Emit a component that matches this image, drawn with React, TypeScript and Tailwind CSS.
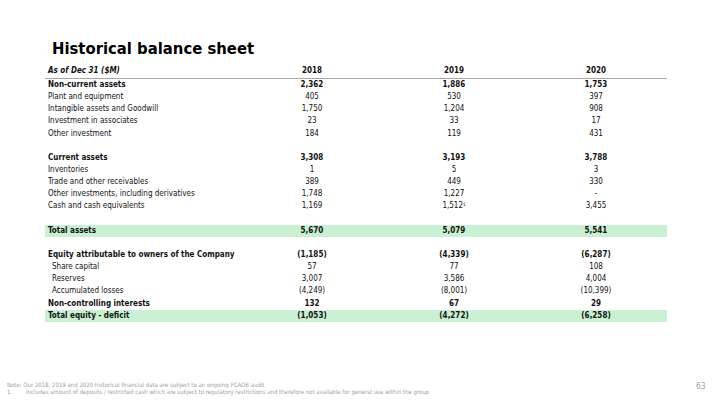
import React from "react";

type Row = {
  label?: string;
  vals?: [React.ReactNode, React.ReactNode, React.ReactNode];
  bold?: boolean;
  green?: boolean;
  indent?: boolean;
};

const rows: Row[] = [
  { label: "Non-current assets", vals: ["2,362", "1,886", "1,753"], bold: true },
  { label: "Plant and equipment", vals: ["405", "530", "397"] },
  { label: "Intangible assets and Goodwill", vals: ["1,750", "1,204", "908"] },
  { label: "Investment in associates", vals: ["23", "33", "17"] },
  { label: "Other investment", vals: ["184", "119", "431"] },
  {},
  { label: "Current assets", vals: ["3,308", "3,193", "3,788"], bold: true },
  { label: "Inventories", vals: ["1", "5", "3"] },
  { label: "Trade and other receivables", vals: ["389", "449", "330"] },
  { label: "Other investments, including derivatives", vals: ["1,748", "1,227", "-"] },
  {
    label: "Cash and cash equivalents",
    vals: [
      "1,169",
      <span>
        1,512<span className="text-[7px]">¹</span>
      </span>,
      "3,455",
    ],
  },
  {},
  { label: "Total assets", vals: ["5,670", "5,079", "5,541"], bold: true, green: true },
  {},
  { label: "Equity attributable to owners of the Company", vals: ["(1,185)", "(4,339)", "(6,287)"], bold: true },
  { label: "Share capital", vals: ["57", "77", "108"], indent: true },
  { label: "Reserves", vals: ["3,007", "3,586", "4,004"], indent: true },
  { label: "Accumulated losses", vals: ["(4,249)", "(8,001)", "(10,399)"], indent: true },
  { label: "Non-controlling interests", vals: ["132", "67", "29"], bold: true },
  { label: "Total equity - deficit", vals: ["(1,053)", "(4,272)", "(6,258)"], bold: true, green: true },
];

export default function App() {
  return (
    <div
      className="relative w-[720px] h-[405px] bg-white overflow-hidden text-[#111]"
      style={{ fontFamily: '"DejaVu Sans Condensed", "DejaVu Sans", sans-serif' }}
    >
      <div className="pl-[52px] pt-[38px] h-[64px]">
        <h1 className="text-[16.5px] leading-[22px] font-bold text-black">Historical balance sheet</h1>
      </div>
      <div className="ml-[45px] w-[622px] text-[8px]">
        <div className="grid grid-cols-[196px_142px_142px_142px] h-[15px] items-center border-b border-[#a6a6a6] font-bold">
          <div className="pl-[3px] italic">As of Dec 31 ($M)</div>
          <div className="text-center">2018</div>
          <div className="text-center">2019</div>
          <div className="text-center">2020</div>
        </div>
        {rows.map((r, i) => (
          <div
            key={i}
            className={`grid grid-cols-[196px_142px_142px_142px] h-[12.15px] items-center leading-none ${
              r.bold ? "font-bold" : ""
            } ${r.green ? "bg-[#c9f0d3]" : ""}`}
          >
            <div className={r.indent ? "pl-[7px]" : "pl-[3px]"}>{r.label}</div>
            <div className="text-center">{r.vals?.[0]}</div>
            <div className="text-center">{r.vals?.[1]}</div>
            <div className="text-center">{r.vals?.[2]}</div>
          </div>
        ))}
      </div>
      <div className="absolute left-[7px] top-[380.5px] text-[6px] leading-[7px] text-[#a0a0a0]">
        <div>Note: Our 2018, 2019 and 2020 historical financial data are subject to an ongoing PCAOB audit</div>
        <div className="flex">
          <span className="w-[19px]">1.</span>
          <span>
            Includes amount of deposits / restricted cash which are subject to regulatory restrictions and therefore not
            available for general use within the group
          </span>
        </div>
      </div>
      <div className="absolute left-[696px] top-[380px] text-[8.5px] text-[#a0a0a0]">63</div>
    </div>
  );
}
